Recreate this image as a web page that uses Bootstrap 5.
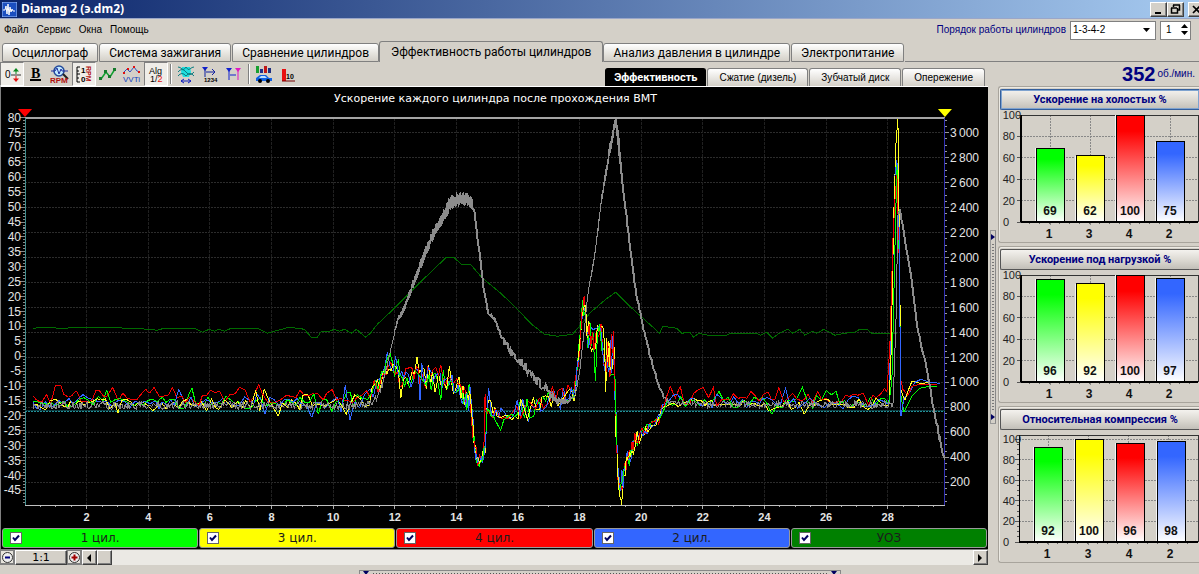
<!DOCTYPE html>
<html lang="ru">
<head>
<meta charset="utf-8">
<meta name="viewport" content="width=device-width, initial-scale=1">
<title>Diamag 2 (э.dm2)</title>
<link href="https://cdn.jsdelivr.net/npm/bootstrap@5.3.0/dist/css/bootstrap.min.css" rel="stylesheet">
<style>
:root{--face:#d4d0c8;--shade:#808080;--navy:#000080}
body{background:var(--face);font:10px/14px "Liberation Sans",Arial,sans-serif;color:#000;overflow-x:hidden}
button,input,select{font:inherit;color:inherit;border-radius:0}
.titlebar{height:19px;background:linear-gradient(90deg,#0a246a,#a6caf0);color:#fff;font:bold 12px/18px "Noto Sans",sans-serif;overflow:hidden;border-bottom:1px solid #9aa6c8;padding-left:2px}
.raised{background:var(--face);border:1px solid;border-color:#fff #404040 #404040 #fff;box-shadow:inset -1px -1px 0 var(--shade);padding:0}
.winbtn{width:17px;height:15px;flex:none}
.winbtn svg,.sq svg{display:block;margin:auto}
.closebtn{margin-right:-6px}
.menurow{height:22px}
.menurow a{color:#000;text-decoration:none}
.order{color:var(--navy)}
.combo{width:86px;height:19px;padding:0 18px 0 2px;border:1px solid var(--shade);background:#fff;appearance:none}
.combobox{position:relative}
.combobox svg{position:absolute;right:5px;top:7px;pointer-events:none}
.spin{width:31px;height:19px;border:1px solid var(--shade);background:#fff}
.spin input{width:17px;border:0;padding:0 0 0 5px;background:transparent}
.spin button{border:0;background:transparent;height:8px;width:12px;padding:0}
.spin svg{display:block;margin:auto}
.tabs{height:21px;padding-left:2px;gap:1px}
.tab{font:12px/16px Roboto,Arial,sans-serif;height:19px;border:1px solid var(--shade);border-radius:3px 3px 0 0;background:linear-gradient(#fff,#e4e2dc 60%,var(--face));padding:0 9px;white-space:nowrap}
.tab.current{height:21px;background:var(--face);border-bottom:0;line-height:19px;padding:0 11px;margin:0 -1px}
.tabfill{flex:1;height:1px;background:var(--shade)}
.toolrow{height:24px}
.side{width:210px;flex:none}
.panels{width:201px;flex:none}
.tool{width:24px;height:24px;border:1px solid transparent;background:transparent;padding:0;flex:none}
.tool svg{display:block;margin:0 auto}
.tool.down{background:#efede8;border-color:var(--shade) #fff #fff var(--shade)}
.sep{width:2px;height:20px;margin:0 2px;border-left:1px solid var(--shade);border-right:1px solid #fff}
.subtabs{gap:1px}
.sub{height:18px;line-height:17px;border:1px solid var(--shade);border-bottom:0;border-radius:3px 3px 0 0;background:linear-gradient(#fff,var(--face));padding:0 11px}
.sub.on{background:#000;color:#fff;border-color:#000;font-family:Roboto,Arial,sans-serif;font-size:11px;font-weight:bold;padding:0 8px}
.rpm{color:var(--navy);white-space:nowrap;gap:2px}
.rpm b{font-size:20px;line-height:22px}
.scope{background:#000;border:1px solid var(--shade);border-top:1px solid #fff;border-right:0}
.scope svg,.minichart{display:block;width:100%;height:auto}
.minichart{overflow:visible}
.legend{gap:1px;padding:1px}
.chan{height:20px;border:1px solid #999;border-radius:3px;flex:1;font:12px/18px "DejaVu Sans",sans-serif;position:relative}
.chan input{appearance:none;width:12px;height:12px;margin:0;background:#fff;border:1px solid #666;position:absolute;left:7px;top:3px}
.chan input:checked{background:#fff url("data:image/svg+xml,%3Csvg xmlns='http://www.w3.org/2000/svg' viewBox='0 0 10 10'%3E%3Cpath d='M2 4.5L4 7 8 2.5' fill='none' stroke='%23000060' stroke-width='2'/%3E%3C/svg%3E")}
.chan label{color:#1c1c1c}
.scroller{height:15px;background:#ebe9e4}
.sq{width:15px;height:15px;flex:none}
.zoom{width:52px;font:11px/14px "DejaVu Sans",sans-serif}
.round{border-color:var(--shade);background:#e6e3dc}
.splitv{width:10px;flex:none}
.grip{width:6px;height:194px;margin-top:144px;border:1px solid #999;border-right-color:#888;background:radial-gradient(circle,#777 1px,transparent 1px) 0 0/4px 3px}
.griph{width:482px;max-width:90%;height:6px;border:1px solid #888;border-bottom:0;background:radial-gradient(circle,#555 1px,transparent 1px) 0 1px/3px 4px}
.grip svg,.griph svg{display:block;background:var(--face)}
.panel{border:1px solid #a8a49c;border-right:0;border-radius:3px 0 0 3px;box-shadow:inset 1px 1px 0 #eceae4;height:157px;padding:2px 0 0 1px;margin-bottom:3px;overflow:hidden}
.head{height:21px;width:100%;border:1px solid #555;border-right:0;background:linear-gradient(#f4f2ee,#d8d5ce 60%,#c2bfb8);color:var(--navy);font-family:Roboto,Arial,sans-serif;font-size:11px;font-weight:bold;border-radius:2px 0 0 2px}
.head.focus{border-color:#345f9c;box-shadow:inset 0 0 0 1px #7fa3cf}
</style>
</head>
<body>
<header>
  <div class="titlebar d-flex align-items-center">
    <svg width="15" height="15" viewBox="0 0 15 15" style="flex:none"><rect width="15" height="15" fill="#1b4fc0" stroke="#9fc3ff"/><path d="M1 8h2l1-4 1 8 1-10 1 11 1-8 1 5 1-3 1 2h2" fill="none" stroke="#fff"/></svg>
    <span class="ms-1 flex-grow-1">Diamag 2 (э.dm2)</span>
    <button class="winbtn raised" aria-label="Свернуть"><svg width="11" height="9"><path d="M2 8h6" stroke="#000" stroke-width="2"/></svg></button>
    <button class="winbtn raised me-1" aria-label="Восстановить"><svg width="11" height="10"><path d="M3.500 1v2M3 1h7M9.500 1v5H8M1 4h6M1.500 4v5H7.500V4" fill="none" stroke="#000" stroke-width="1.500"/></svg></button>
    <button class="winbtn raised closebtn" aria-label="Закрыть"><svg width="10" height="9"><path d="M1 1l7 7M8 1l-7 7" stroke="#000" stroke-width="1.700"/></svg></button>
  </div>
  <div class="menurow d-flex align-items-center">
    <nav class="d-flex gap-2 ps-1 flex-grow-1"><a href="#">Файл</a><a href="#">Сервис</a><a href="#">Окна</a><a href="#">Помощь</a></nav>
    <label class="order me-1" for="ord">Порядок работы цилиндров</label>
    <div class="combobox me-1"><select id="ord" class="combo d-block"><option>1-3-4-2</option></select><svg width="8" height="5"><path d="M0 0h7L3.500 4z"/></svg></div>
    <div class="spin d-flex me-2"><input type="text" value="1" aria-label="Номер цилиндра"><div><button class="d-block" aria-label="Больше"><svg width="7" height="5"><path d="M0 5h7L3.500 1z"/></svg></button><button class="d-block" aria-label="Меньше"><svg width="7" height="5"><path d="M0 0h7L3.500 4z"/></svg></button></div></div>
  </div>
  <div class="tabs d-flex align-items-end" role="tablist">
    <button class="tab" role="tab">Осциллограф</button><button class="tab" role="tab">Система зажигания</button><button class="tab" role="tab">Сравнение цилиндров</button><button class="tab current" role="tab">Эффективность работы цилиндров</button><button class="tab" role="tab">Анализ давления в цилиндре</button><button class="tab" role="tab">Электропитание</button><div class="tabfill"></div>
  </div>
</header>

<div class="toolrow d-flex">
  <div class="d-flex flex-grow-1 align-items-center justify-content-between">
    <div class="d-flex align-items-center">
      <button class="tool down" aria-label="Ноль"><svg width="20" height="20"><text x="3" y="14" font-size="10">0</text><path d="M9 11h10" stroke="#333"/><path d="M11 7.500h6L14 4z" fill="#0a8a20"/><path d="M14 7v3" stroke="#0a8a20"/><path d="M11 14.500h6L14 18z" fill="#e01010"/><path d="M14 12v3" stroke="#e01010"/></svg></button>
      <button class="tool" aria-label="Жирный"><svg width="20" height="20"><text x="5" y="14" font-size="14" font-weight="bold" font-family="Liberation Serif">B</text><path d="M4 16h11" stroke="#000" stroke-width="2"/></svg></button>
      <button class="tool" aria-label="RPM"><svg width="20" height="20"><circle cx="9" cy="7" r="5" fill="#bfe8ff" stroke="#234a9a" stroke-width="1.500"/><path d="M1 7h4l2-3 2 6 2-5 1 2h6" fill="none" stroke="#2030a0"/><path d="M13 10l5 5" stroke="#222" stroke-width="2"/><text x="0" y="19" font-size="8" font-weight="bold" fill="#b01010">RPM</text></svg></button>
      <button class="tool down" aria-label="Шкала"><svg width="20" height="20"><path d="M6 3H3v15h3M3 7h2M3 10h3M3 14h2" fill="none" stroke="#000"/><text x="7" y="9" font-size="8" font-weight="bold">1</text><text x="7" y="18" font-size="8" font-weight="bold">0</text><text transform="translate(12 2) rotate(90)" font-size="7" font-weight="bold" fill="#b01010">RPM</text></svg></button>
      <button class="tool" aria-label="График"><svg width="20" height="20"><path d="M3 15l5-7 4 5 5-8" fill="none" stroke="#10a030" stroke-width="1.500"/><path d="M1 13h3v3H1zM6 6h3v3H6zM10 11h3v3h-3zM15 4h3v3h-3z" fill="#157a2c"/></svg></button>
      <button class="tool" aria-label="VVTi"><svg width="20" height="20"><path d="M1 9l4-4 3 3 4-5 3 4 3 1" fill="none" stroke="#3050c0"/><path d="M1 8h2v2H1zM5 4h2v2H5zM11 2h2v2h-2zM16 7h2v2h-2z" fill="#e01010"/><text x="1" y="18" font-size="8" fill="#1040c0">VVTi</text></svg></button>
      <button class="tool down" aria-label="Алгоритм"><svg width="20" height="20"><text x="3" y="10" font-size="9">Alg</text><text x="4" y="18" font-size="9">1/<tspan fill="#e01010">2</tspan></text></svg></button>
      <span class="sep"></span>
      <button class="tool" aria-label="Сигнал"><svg width="20" height="20"><path d="M6 3h8l1 5-2 5H7L5 8z" fill="#20e0e0"/><path d="M2 3q2 0 4 2t4-2q2 4 4 2t4-2M2 8q4-5 8 0t8 0M2 12q4-5 8 0 4-5 8 0" fill="none" stroke="#0b7c80"/><path d="M5 17h10M8 15l-3 2 3 2M12 15l3 2-3 2" fill="none" stroke="#1020c0"/></svg></button>
      <button class="tool" aria-label="Порядок"><svg width="20" height="20"><path d="M2 3h6L5 7z" fill="#1020d0"/><path d="M5 4v9M6 8h9M12 5l3 3-3 3" fill="none" stroke="#1020a0"/><text x="4" y="18" font-size="6" font-weight="bold">1234</text></svg></button>
      <button class="tool" aria-label="Интервал"><svg width="20" height="20"><path d="M2 4h6L5 8z" fill="#1020d0"/><path d="M5 5v11M6 11h6" stroke="#1020d0"/><path d="M11 4h6l-3 4z" fill="#e018c0"/><path d="M14 5v11" stroke="#e018c0"/></svg></button>
      <span class="sep"></span>
      <button class="tool" aria-label="Автомобиль"><svg width="20" height="20"><path d="M2 2h3v7H2z" fill="#18a030"/><path d="M6 5h3v4H6z" fill="#20308a"/><path d="M10 2h3v7h-3z" fill="#c01818"/><path d="M14 4h3v5h-3z" fill="#203080"/><path d="M2 14l4-3h6l3 3h3v3H2z" fill="#1060e0"/><path d="M7 12h4l2 2H5z" fill="#bfe0ff"/><circle cx="6" cy="17" r="2"/><circle cx="14" cy="17" r="2"/></svg></button>
      <button class="tool" aria-label="Отчёт"><svg width="20" height="20"><path d="M4 5h4v12H4z" fill="#e81010"/><text x="8" y="15" font-size="7" font-weight="bold">10</text><path d="M4 17h13" stroke="#700"/></svg></button>
    </div>
    <div class="subtabs d-flex align-self-end me-1">
      <button class="sub on">Эффективность</button><button class="sub">Сжатие (дизель)</button><button class="sub">Зубчатый диск</button><button class="sub">Опережение</button>
    </div>
  </div>
  <div class="side rpm d-flex justify-content-end align-items-center pe-1"><b>352</b><span>об./мин.</span></div>
</div>

<main class="d-flex">
  <div class="flex-grow-1">
    <div class="scope">
      <svg id="scope" viewBox="2 87 986 440" role="img" aria-label="Ускорение каждого цилиндра после прохождения ВМТ" font-family="Liberation Sans, Arial, sans-serif"></svg>
      <div class="legend d-flex">
        <div class="chan text-center" style="background:#00ff00"><input type="checkbox" id="c1" checked><label for="c1">1 цил.</label></div>
        <div class="chan text-center" style="background:#ffff00"><input type="checkbox" id="c3" checked><label for="c3">3 цил.</label></div>
        <div class="chan text-center" style="background:#ff0000"><input type="checkbox" id="c4" checked><label for="c4">4 цил.</label></div>
        <div class="chan text-center" style="background:#3366ff"><input type="checkbox" id="c2" checked><label for="c2">2 цил.</label></div>
        <div class="chan text-center" style="background:#008000"><input type="checkbox" id="cu" checked><label for="cu">УОЗ</label></div>
      </div>
    </div>
    <div class="scroller d-flex">
      <button class="sq raised round" aria-label="Уменьшить"><svg width="13" height="13"><circle cx="6.500" cy="6.500" r="5" fill="#eee" stroke="#333"/><path d="M4 6.500h5" stroke="#000080" stroke-width="2"/></svg></button>
      <button class="zoom raised">1:1</button>
      <button class="sq raised round" aria-label="Увеличить"><svg width="13" height="13"><circle cx="6.500" cy="6.500" r="5" fill="#eee" stroke="#333"/><path d="M3.500 6.500h6M6.500 3.500v6" stroke="#a00000" stroke-width="2"/></svg></button>
      <button class="sq raised" aria-label="Влево"><svg width="5" height="8"><path d="M4 0v8L0 4z"/></svg></button>
      <span class="sq raised"></span>
      <button class="sq raised ms-auto" aria-label="Вправо"><svg width="5" height="8"><path d="M0 0v8l4-4z"/></svg></button>
    </div>
  </div>
  <div class="splitv d-flex justify-content-center">
    <div class="grip d-flex flex-column justify-content-between"><svg width="4" height="12"><path d="M0 3v6l4-3z" fill="#000060"/></svg><svg width="4" height="12"><path d="M0 3v6l4-3z" fill="#000060"/></svg></div>
  </div>
  <aside class="panels" id="side"></aside>
</main>
<footer class="d-flex justify-content-center pt-1"><div class="griph d-flex justify-content-between"><svg width="12" height="5"><path d="M3 0h6L6 4z" fill="#000060"/></svg><svg width="12" height="5"><path d="M3 0h6L6 4z" fill="#000060"/></svg></div></footer>

<script>
// ---- helpers -------------------------------------------------------------
let seed = 7;
const rnd = () => (seed = (seed * 16807) % 2147483647) / 2147483647;
const line = (x1, y1, x2, y2, c, extra = '') => `<path d="M${x1} ${y1}L${x2} ${y2}" stroke="${c}" fill="none" ${extra}/>`;
const poly = (pts, c, w = 1) => `<polyline points="${pts.map(p => p[0].toFixed(1) + ',' + p[1].toFixed(1)).join(' ')}" fill="none" stroke="${c}" stroke-width="${w}"/>`;
// linear interpolation over [x, ...values] rows
function at(rows, x, k) {
  let i = 1;
  while (i < rows.length - 1 && rows[i][0] < x) i++;
  const a = rows[i - 1], b = rows[i], t = Math.min(1, Math.max(0, (x - a[0]) / (b[0] - a[0])));
  return a[k] + (b[k] - a[k]) * t;
}

// ---- main chart ----------------------------------------------------------
const L = 26, R = 945, T = 118, B = 505;
const X = v => L + v * 30.78, Y = v => 356 - v * 2.98, Q = v => 507 - v * 0.1248;
let s = '<text x="496" y="102" text-anchor="middle" fill="#fff" font-size="11" font-family="DejaVu Sans, sans-serif">Ускорение каждого цилиндра после прохождения ВМТ</text>';
s += '<g shape-rendering="crispEdges">';
for (let v = 200; v <= 3000; v += 200) s += line(L, Q(v), R, Q(v), '#2c2c2c', 'stroke-dasharray="2 1"');
for (let v = 2; v <= 28; v += 2) s += line(X(v), T, X(v), B, '#202020', 'stroke-dasharray="3 1"');
for (let v = -49; v <= 80; v++) s += line(v % 5 ? 24 : 21, Y(v), L, Y(v), '#888');
for (let v = 50; v <= 3100; v += 50) s += line(R, Q(v), R + (v % 200 ? 2 : 4), Q(v), '#999');
for (let v = .5; v <= 29.5; v += .5) s += line(X(v), B, X(v), B + (v % 2 ? 2 : 4), '#aaa');
s += line(L, T, R, T, '#a4a4a4', 'stroke-width="2"') + line(L, B, R, B, '#c0c0c0');
s += line(L + .5, T, L + .5, B, '#3f8f8f') + line(R, T, R, B, '#3434b8');
s += line(L, 410.5, R, 410.5, '#0c3c40') + line(L, 411.5, R, 411.5, '#239098', 'stroke-dasharray="2 1"');
s += '</g><g fill="#e4e4e4" font-size="12">';
for (let v = -45; v <= 80; v += 5) s += `<text x="22" y="${Y(v) + 4}" text-anchor="end">${v}</text>`;
for (let v = 200; v <= 3000; v += 200) s += `<text x="950" y="${Q(v) + 4}">${v >= 1000 ? (v / 1000 | 0) + '\u2009' + String(v % 1000).padStart(3, '0') : v}</text>`;
for (let v = 2; v <= 28; v += 2) s += `<text x="${X(v)}" y="521" text-anchor="middle" font-size="11" font-weight="bold">${v}</text>`;
s += '</g><path d="M19 109h14l-7 8z" fill="#f00"/><path d="M938 109h14l-7 8z" fill="#ff0"/>';

s += `<clipPath id="plot"><path d="M${L} ${T}H${R}V${B}H${L}z"/></clipPath><g clip-path="url(#plot)" shape-rendering="crispEdges">`;
// ignition advance
s += poly([[34,328],[45,327],[60,328],[100,327],[130,328],[150,329],[158,330],[165,328],[195,328],[203,332],[210,329],[215,331],[220,329],[225,331],[232,328],[258,328],[268,333],[275,331],[290,327],[305,329],[312,337],[318,337],[322,331],[330,331],[335,329],[340,331],[345,329],[352,333],[357,329],[366,337],[371,333],[378,324],[395,308],[410,293],[425,278],[447,257],[454,257],[462,264],[471,264],[482,277],[500,292],[515,306],[532,324],[545,334],[558,336],[573,334],[585,320],[590,313],[605,300],[616,292],[630,306],[650,324],[660,333],[663,326],[677,328],[682,333],[690,332],[694,337],[699,333],[708,335],[727,335],[731,333],[757,333],[761,335],[767,332],[773,338],[778,334],[788,329],[793,333],[800,329],[805,335],[813,331],[817,333],[824,329],[835,335],[845,333],[855,332],[860,329],[867,329],[872,333],[897,333]], '#006a00');

// cylinder traces: x, level, spread, step
const env = [[34,402,7,4],[280,401,8,4],[340,401,10,4],[365,401,8,4],[374,393,9,3],[383,377,9,2],[391,358,9,2],[397,366,12,2],[402,382,9,2],[409,378,9,2],[418,372,12,2],[435,378,12,2],[450,378,11,2],[460,386,10,2],[467,400,10,1],[471,400,15,1],[475,445,8,1],[478,462,5,1],[482,459,6,1],[486,450,6,1],[488,398,12,2],[493,410,8,2],[499,420,8,3],[507,409,9,3],[530,408,9,3],[550,400,8,3],[564,398,9,3],[575,392,7,1],[580,345,9,1],[583,310,9,1],[585,305,10,1],[588,333,12,1],[595,342,13,2],[601,330,14,2],[606,355,19,1],[614,358,22,1],[616,410,12,1],[618,470,12,1],[621,492,11,1],[624,470,12,1],[628,458,10,1],[632,452,8,1],[637,438,8,2],[645,430,5,2],[658,422,5,2],[664,406,6,2],[670,401,7,4],[750,402,7,4],[888,402,7,4]];
const tail = {
  '#00ff00':[[889,404],[892,380],[895,250],[897,165],[899,240],[901,395],[904,412],[909,402],[912,396],[920,388],[930,386],[937,386]],
  '#f00000':[[887,392],[890,345],[893,240],[895,200],[897,175],[899,245],[901,380],[903,389],[908,395],[912,386],[920,384],[937,384]],
  '#3366ff':[[889,404],[891,330],[893,260],[895,176],[897,160],[899,215],[901,416],[904,398],[910,392],[915,382],[921,379],[930,382],[940,383]],
  '#ffff20':[[889,405],[891,360],[894,210],[896,145],[898,119],[899,200],[901,390],[905,400],[908,391],[912,381],[920,383],[937,382]]
};
const spikes = {
  '#f00000':[[59,385],[63,385],[95,390],[113,387],[146,389],[155,387],[172,387],[213,390],[239,387],[257,384],[303,390],[418,366],[486,394],[553,386],[563,388],[671,386],[682,386],[704,387],[714,387],[781,387],[888,388]],
  '#3366ff':[[178,389],[268,414],[312,417],[347,385],[351,420],[387,352],[421,400],[489,388],[529,422],[787,388]],
  '#00ff00':[[107,390],[193,388],[318,414],[441,400],[500,430],[595,381],[720,391],[774,414],[801,387],[825,390],[834,391]],
  '#ffff20':[[257,390],[265,389],[278,416],[402,398],[418,357],[606,392],[622,505],[806,414]]
};
// traces are cut into short runs and the runs interleaved, so no cylinder hides the others
const runs = [];
for (const [c, dy] of [['#00ff00',0],['#f00000',-3],['#3366ff',0],['#ffff20',2]]) {
  const pts = [];
  for (let x = 34; x < 887; x += at(env, x, 3) * (.8 + rnd() * .6)) {
    const calm = x < 370 || x > 665;
    const d = calm ? rnd() + rnd() - 1 : rnd() * 2 - 1;
    pts.push([x, at(env, x, 1) + dy * (calm ? 1.300 : .3) + d * at(env, x, 2) * 1.200]);
  }
  for (const p of spikes[c]) {
    const near = pts.reduce((a, b) => Math.abs(b[0] - p[0]) < Math.abs(a[0] - p[0]) ? b : a);
    near[1] = p[1];
  }
  const all = pts.concat(tail[c]);
  for (let i = 0; i < all.length - 1; i += 2) runs.push([rnd(), all.slice(i, i + 3), c]);
}
runs.sort((a, b) => a[0] - b[0]);
s += runs.map(r => poly(r[1], r[2])).join('');

// engine speed: x, level, spread
const rev = [[34,405,4],[365,405,4],[374,403,4],[382,388,4],[388,364,2],[393,342,2],[398,320,5],[403,312,5],[407,302,5],[412,288,6],[420,268,7],[432,238,7],[443,217,8],[450,205,9],[457,200,8],[463,198,7],[469,200,7],[473,204,7],[476,222,3],[481,262,2],[485,294,2],[488,311,4],[495,319,4],[502,338,3],[512,352,4],[525,366,4],[535,378,5],[548,390,4],[557,400,4],[568,401,3],[575,396,3],[580,372,2],[585,325,2],[588,296,2],[595,255,2],[602,198,4],[610,150,8],[614,128,8],[616,122,4],[618,135,8],[623,185,3],[629,235,2],[636,290,2],[643,325,2],[651,358,2],[660,388,2],[666,400,3],[675,404,3],[888,404,4],[893,406,3],[896,325,1],[898,215,1],[900,210,3],[905,240,3],[911,275,2],[917,323,2],[922,348,3],[929,380,3],[935,415,4],[940,440,6],[945,462,3]];
const rp = [];
let flip = 1;
for (let x = 34; x <= 945;) {
  const solid = (x > 395 && x < 474) || (x > 590 && x < 622);
  const d = solid ? (flip = -flip) * (.4 + rnd() * .6) : rnd() * 2 - 1;
  rp.push([x, at(rev, x, 1) + d * at(rev, x, 2)]);
  x += solid ? .5 : 1;
}
// steep slopes are drawn heavier than the idle parts
const part = (a, b) => rp.filter(p => p[0] >= a && p[0] <= b);
s += poly(rp, '#8c8c8c') + poly(part(474, 572), '#8c8c8c', 2) + poly(part(616, 664), '#8c8c8c', 2) + poly(part(900, 945), '#8c8c8c', 2) + '</g>';
document.getElementById('scope').innerHTML = s;

// ---- side panels ---------------------------------------------------------
const order = [[1,'#00ff00'],[3,'#ffff00'],[4,'#ff0000'],[2,'#3366ff']];
const panels = [['Ускорение на холостых %', [69,62,100,75], 21, 0], ['Ускорение под нагрузкой %', [96,92,100,97], 21, 0], ['Относительная компрессия %', [92,100,96,98], 19, 4]];
document.getElementById('side').innerHTML = panels.map(([title, vals, x0, drop], n) => {
  const top = 5, bot = 112, y = v => bot - v / 100 * (bot - top - drop);
  let g = '<g shape-rendering="crispEdges">';
  for (let v = 0; v <= 100; v += 20) g += line(x0 - 4, y(v), x0, y(v), '#555') + (v ? line(x0, y(v), 198, y(v), '#888', 'stroke-dasharray="2 1"') : '');
  for (let v = 5; v < 100; v += 5) g += drop ? line(x0 - 2, y(v), x0, y(v), '#555') : '';
  for (let i = 0; i < 4; i++) g += line(x0 + 29 + i * 40, top, x0 + 29 + i * 40, bot + 4, '#888', 'stroke-dasharray="2 1"');
  for (let i = 0; i < 17; i++) g += line(x0 + 8 + i * 10, bot, x0 + 8 + i * 10, bot + 2, '#666');
  g += `<path d="M${x0} ${top}H198V${bot}" fill="none" stroke="#333"/><path d="M${x0} ${top}V${bot}" stroke="#000" stroke-width="${drop ? 1 : 2}"/>`;
  order.forEach(([k, c], i) => {
    const bx = x0 + 15 + i * (drop ? 41 : 40);
    g += `<linearGradient id="g${n}${i}" x1="0" y1="0" x2="0" y2="1"><stop offset="0" stop-color="${c}"/><stop offset=".15" stop-color="${c}"/><stop offset="1" stop-color="#fff"/></linearGradient><path d="M${bx - 1} ${y(vals[i])}h30V${bot}h-30z" fill="#f4f4f4"/><path d="M${bx} ${y(vals[i])}h28V${bot}h-28z" fill="url(#g${n}${i})" stroke="#000"/>`;
  });
  g += `<path d="M${x0} ${bot}H198" stroke="#000" stroke-width="2"/></g><g font-size="11" font-family="Liberation Sans, Arial, sans-serif" fill="#222">`;
  for (let v = 0; v <= 100; v += 20) g += `<text x="${v == 100 ? 21 : v ? 15 : 9}" y="${y(v) + 4}" text-anchor="end">${v}</text>`;
  order.forEach(([k], i) => {
    const cx = x0 + 29 + i * (drop ? 41 : 40);
    g += `<g text-anchor="middle" font-size="12" font-weight="bold" fill="#111"><text x="${cx}" y="105">${vals[i]}</text><text x="${cx - 1}" y="128">${k}</text></g>`;
  });
  return `<section class="panel"><button class="head${n ? '' : ' focus'}">${title}</button><svg class="minichart" viewBox="0 0 199 132">${g}</g></svg></section>`;
}).join('');
</script>
<script src="https://cdn.jsdelivr.net/npm/bootstrap@5.3.0/dist/js/bootstrap.bundle.min.js"></script>
</body>
</html>
